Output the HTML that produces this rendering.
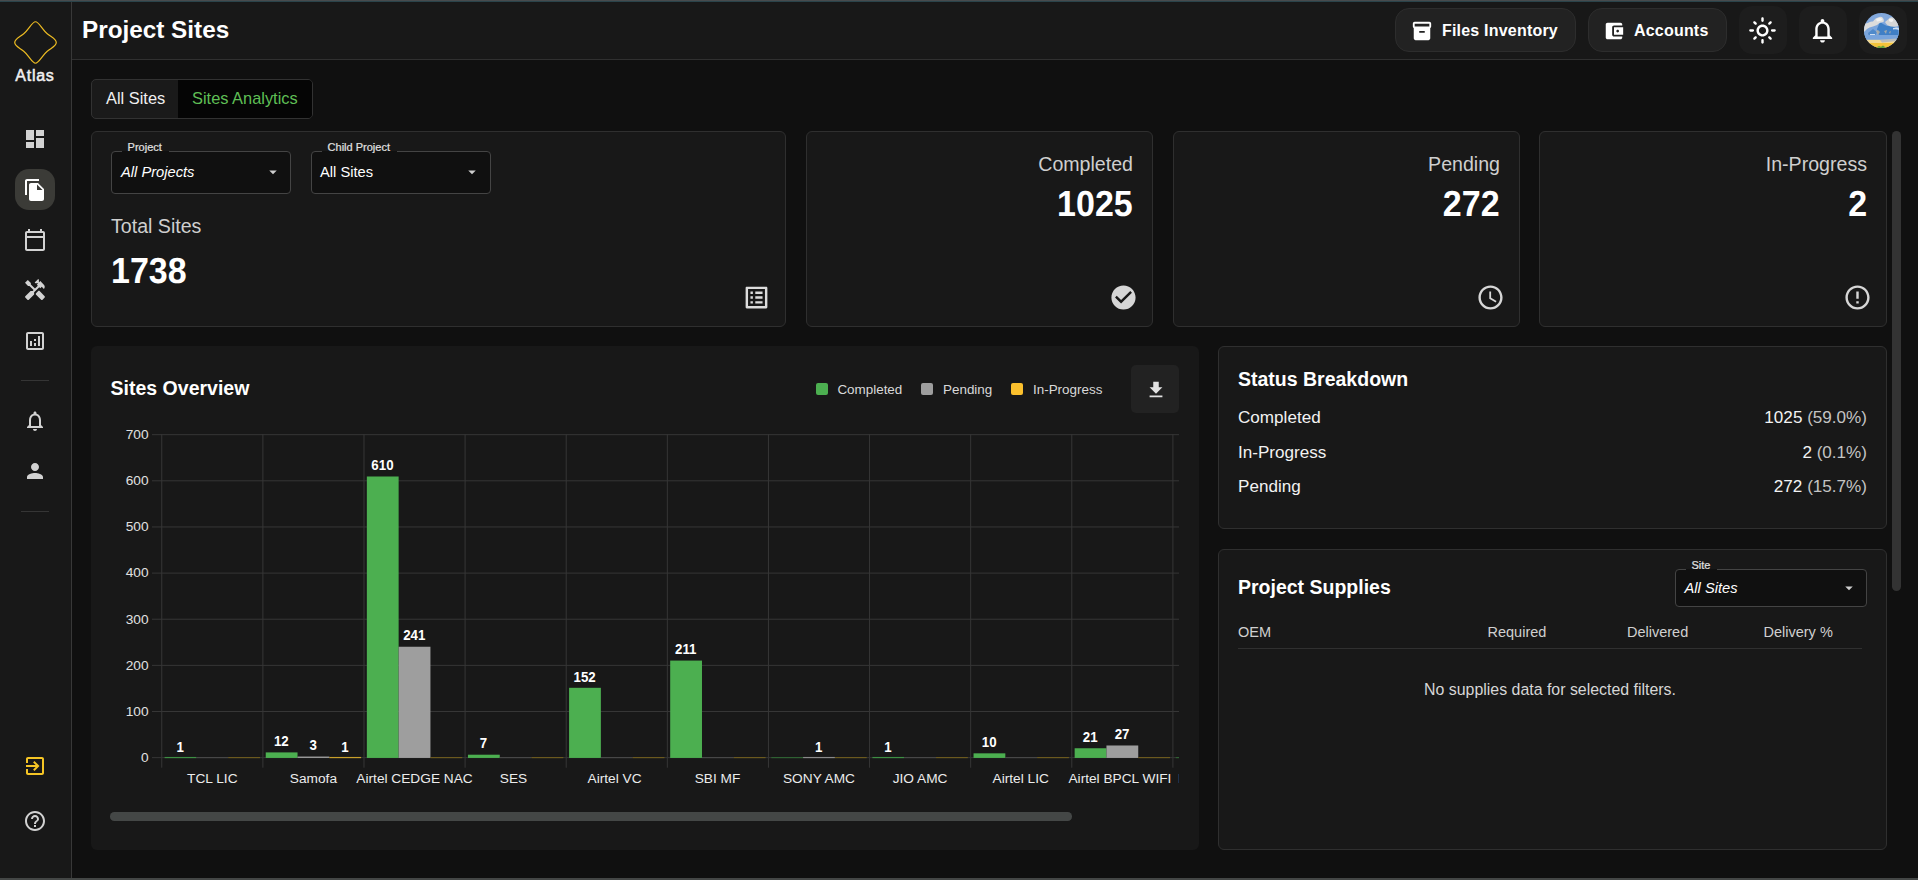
<!DOCTYPE html>
<html lang="en">
<head>
<meta charset="utf-8">
<title>Project Sites</title>
<style>
*{box-sizing:border-box;margin:0;padding:0}
html,body{width:1918px;height:880px;overflow:hidden;background:#101010;font-family:"Liberation Sans",sans-serif;color:#fff}
.abs{position:absolute}
#topstrip{left:0;top:0;width:1918px;height:2px;background:linear-gradient(#474b4d 0 50%,#2a434a 50% 100%)}
#botstrip{left:0;top:878px;width:1918px;height:2px;background:#444746}
#sidebar{left:0;top:2px;width:71px;height:876px;background:#181818}
#sideline{left:71px;top:2px;width:1px;height:876px;background:#383838}
#header{left:72px;top:2px;width:1846px;height:57px;background:#181818}
#headline{left:72px;top:59px;width:1846px;height:1px;background:#303030}
svg.ic{position:absolute;width:24px;height:24px;fill:#d2d2d2}
.card{position:absolute;background:#181818;border:1px solid #2f2f2f;border-radius:6px}
.t{position:absolute;white-space:nowrap;line-height:1}

.hbtn{background:#222;border:1px solid #2d2d2d;border-radius:14px}
.ibtn{width:48px;height:48px;background:#1d1d1d;border-radius:13px}

.sel{border:1px solid #444;border-radius:4px;background:#101010}
.lbl{font-size:11px;color:#e2e2e2;-webkit-text-stroke:0.200px #e2e2e2}
.lbl span{background:linear-gradient(#181818 0 72.300%,#101010 72.300%);padding:0 7px 0 5.500px;margin-left:-5.500px;display:inline-block;line-height:18px}
.sl{font-size:19.600px;color:#cfcfcf}
.sn{font-size:36.3px;font-weight:bold;color:#fff;text-rendering:geometricPrecision;transform:scaleX(0.9366);transform-origin:100% 50%}

.lg{width:12px;height:12px;border-radius:2px}
.lgt{font-size:13.430px;color:#d8d8d8}
.row{font-size:17.100px;color:#f2f2f2}
.row span{color:#c4c4c4}
.th{font-size:14.500px;color:#d0d0d0}
</style>
</head>
<body>
<div class="abs" id="sidebar"></div>
<div class="abs" id="sideline"></div>
<div class="abs" id="header"></div>
<div class="abs" id="headline"></div>
<div class="abs" id="topstrip"></div>
<div class="abs" id="botstrip"></div>

<!-- SIDEBAR -->
<svg class="abs" style="left:12px;top:18.900px;width:47px;height:47px" viewBox="0 0 48 48"><path d="M24 2.8 C27.5 2.8 31 11 36 15 C41 19 45.2 20.5 45.2 24 C45.2 27.5 41 29 36 33 C31 37 27.5 45.2 24 45.2 C20.5 45.2 17 37 12 33 C7 29 2.8 27.5 2.8 24 C2.8 20.5 7 19 12 15 C17 11 20.5 2.8 24 2.8 Z" fill="none" stroke="#ecbb22" stroke-width="1.25"/></svg>
<div class="t" id="atlas" style="left:15.300px;top:68.200px;font-size:16px;font-weight:normal;letter-spacing:0.750px;-webkit-text-stroke:0.500px #f0f0f0;color:#f0f0f0">Atlas</div>

<svg class="ic" style="left:23px;top:126.750px" viewBox="0 0 24 24"><path d="M3 13h8V3H3v10zm0 8h8v-6H3v6zm10 0h8V11h-8v10zm0-18v6h8V3h-8z"/></svg>
<div class="abs" style="left:15px;top:169px;width:40px;height:41px;border-radius:14px;background:#3b3b37"></div>
<svg class="ic" style="left:23px;top:178px;fill:#fff" viewBox="0 0 24 24"><path d="M16 1H4c-1.1 0-2 .9-2 2v14h2V3h12V1zm-1 4 6 6v10c0 1.1-.9 2-2 2H7.99C6.89 23 6 22.1 6 21l.01-14c0-1.100.89-2 1.990-2h7zm-1 7h5.500L14 6.500V12z"/></svg>
<svg class="ic" style="left:23px;top:228px" viewBox="0 0 24 24"><path d="M20 3h-1V1h-2v2H7V1H5v2H4c-1.100 0-2 .9-2 2v16c0 1.100.9 2 2 2h16c1.100 0 2-.9 2-2V5c0-1.100-.9-2-2-2zm0 18H4V10h16v11zm0-13H4V5h16v3z"/></svg>
<svg class="ic" style="left:23px;top:278px" viewBox="0 0 24 24"><path d="M21.670 18.170l-5.300-5.300h-.99l-2.540 2.540v.99l5.300 5.300c.39.39 1.020.39 1.410 0l2.120-2.120c.39-.38.39-1.020 0-1.410z"/><path d="M17.340 10.190l1.410-1.410 2.120 2.120c1.170-1.170 1.170-3.070 0-4.240l-3.540-3.540-1.410 1.410V1.710l-.7-.71-3.540 3.540.71.710h2.830l-1.410 1.410 1.060 1.060-2.890 2.890-4.130-4.130V5.060L4.830 2.040 2 4.870 5.030 7.900h1.410l4.130 4.130-.85.850H7.600l-5.300 5.300c-.39.39-.39 1.020 0 1.410l2.120 2.120c.39.39 1.020.39 1.410 0l5.300-5.300v-2.120l5.150-5.150 1.060 1.050z"/></svg>
<svg class="ic" style="left:23px;top:329px" viewBox="0 0 24 24"><path d="M19 3H5c-1.100 0-2 .9-2 2v14c0 1.100.9 2 2 2h14c1.100 0 2-.9 2-2V5c0-1.100-.9-2-2-2zm0 16H5V5h14v14zM7 12h2v5H7zm8-5h2v10h-2zm-4 7h2v3h-2zm0-4h2v2h-2z"/></svg>
<div class="abs" style="left:21px;top:380px;width:28px;height:1px;background:#353535"></div>
<svg class="ic" style="left:23px;top:409px" viewBox="0 0 24 24"><path d="M12 22c1.100 0 2-.9 2-2h-4c0 1.100.9 2 2 2zm6-6v-5c0-3.070-1.630-5.640-4.500-6.320V4c0-.83-.67-1.500-1.500-1.500s-1.500.67-1.500 1.500v.68C7.640 5.360 6 7.920 6 11v5l-2 2v1h16v-1l-2-2zm-2 1H8v-6c0-2.480 1.510-4.500 4-4.500s4 2.020 4 4.500v6z"/></svg>
<svg class="ic" style="left:23px;top:459px" viewBox="0 0 24 24"><path d="M12 12c2.210 0 4-1.790 4-4s-1.790-4-4-4-4 1.790-4 4 1.790 4 4 4zm0 2c-2.670 0-8 1.340-8 4v2h16v-2c0-2.660-5.330-4-8-4z"/></svg>
<div class="abs" style="left:21px;top:511px;width:28px;height:1px;background:#353535"></div>
<svg class="ic" style="left:23px;top:754px;fill:#f5c525" viewBox="0 0 24 24"><path d="M10.090 15.590 11.500 17l5-5-5-5-1.410 1.410L12.670 11H3v2h9.670l-2.580 2.590zM19 3H5c-1.110 0-2 .9-2 2v4h2V5h14v14H5v-4H3v4c0 1.100.89 2 2 2h14c1.100 0 2-.9 2-2V5c0-1.100-.9-2-2-2z"/></svg>
<svg class="ic" style="left:23px;top:809px" viewBox="0 0 24 24"><path d="M11 18h2v-2h-2v2zm1-16C6.480 2 2 6.480 2 12s4.480 10 10 10 10-4.480 10-10S17.520 2 12 2zm0 18c-4.410 0-8-3.590-8-8s3.590-8 8-8 8 3.590 8 8-3.590 8-8 8zm0-14c-2.210 0-4 1.790-4 4h2c0-1.100.9-2 2-2s2 .9 2 2c0 2-3 1.750-3 5h2c0-2.250 3-2.500 3-5 0-2.210-1.790-4-4-4z"/></svg>

<!-- HEADER -->
<div class="t" id="title" style="left:82px;top:17.800px;font-size:24.300px;font-weight:bold;color:#fff">Project Sites</div>

<div class="abs hbtn" style="left:1395px;top:8px;width:181px;height:44px"></div>
<svg class="ic" style="left:1411px;top:20px;width:22px;height:22px;fill:#fff" viewBox="0 0 24 24"><path d="M20 2H4c-1 0-2 .9-2 2v3.010c0 .72.43 1.340 1 1.690V20c0 1.100 1.100 2 2 2h14c.9 0 2-.9 2-2V8.700c.57-.35 1-.97 1-1.690V4c0-1.100-1-2-2-2zm-5 12H9v-2h6v2zm5-7H4V4h16v3z"/></svg>
<div class="t" id="fi" style="left:1442px;top:23px;font-size:16px;font-weight:bold;letter-spacing:0.2px">Files Inventory</div>
<div class="abs hbtn" style="left:1588px;top:8px;width:139px;height:44px"></div>
<svg class="ic" style="left:1603.3px;top:20px;width:22px;height:22px;fill:#fff" viewBox="0 0 24 24"><path d="M21 18v1c0 1.100-.9 2-2 2H5c-1.110 0-2-.9-2-2V5c0-1.100.89-2 2-2h14c1.100 0 2 .9 2 2v1h-9c-1.110 0-2 .9-2 2v8c0 1.100.89 2 2 2h9zm-9-2h10V8H12v8zm4-2.500c-.83 0-1.500-.67-1.500-1.500s.67-1.500 1.500-1.500 1.500.67 1.500 1.500-.67 1.500-1.500 1.500z"/></svg>
<div class="t" id="ac" style="left:1634px;top:23px;font-size:16px;font-weight:bold;letter-spacing:0.2px">Accounts</div>
<div class="abs ibtn" style="left:1739px;top:6px"></div>
<svg class="ic" style="left:1747.800px;top:15.800px;width:29px;height:29px;fill:#fff" viewBox="0 0 24 24"><path d="M12 9c1.650 0 3 1.350 3 3s-1.350 3-3 3-3-1.350-3-3 1.350-3 3-3m0-2c-2.760 0-5 2.240-5 5s2.240 5 5 5 5-2.240 5-5-2.240-5-5-5zM2 13h2c.55 0 1-.45 1-1s-.45-1-1-1H2c-.55 0-1 .45-1 1s.45 1 1 1zm18 0h2c.55 0 1-.45 1-1s-.45-1-1-1h-2c-.55 0-1 .45-1 1s.45 1 1 1zM11 2v2c0 .55.45 1 1 1s1-.45 1-1V2c0-.55-.45-1-1-1s-1 .45-1 1zm0 18v2c0 .55.45 1 1 1s1-.45 1-1v-2c0-.55-.45-1-1-1s-1 .45-1 1zM5.990 4.580c-.39-.39-1.030-.39-1.410 0-.39.39-.39 1.030 0 1.410l1.060 1.060c.39.39 1.030.39 1.410 0s.39-1.030 0-1.410L5.990 4.580zm12.370 12.370c-.39-.39-1.030-.39-1.410 0-.39.39-.39 1.030 0 1.410l1.060 1.060c.39.39 1.030.39 1.410 0 .39-.39.39-1.030 0-1.410l-1.060-1.060zm1.060-10.960c.39-.39.39-1.030 0-1.410-.39-.39-1.030-.39-1.410 0l-1.060 1.060c-.39.39-.39 1.030 0 1.410s1.030.39 1.410 0l1.060-1.060zM7.050 18.360c.39-.39.39-1.030 0-1.410-.39-.39-1.030-.39-1.410 0l-1.060 1.060c-.39.39-.39 1.030 0 1.410s1.030.39 1.410 0l1.060-1.060z"/></svg>
<div class="abs ibtn" style="left:1799px;top:6px"></div>
<svg class="ic" style="left:1807.900px;top:15.900px;width:29px;height:29px;fill:#fff" viewBox="0 0 24 24"><path d="M12 22c1.100 0 2-.9 2-2h-4c0 1.100.9 2 2 2zm6-6v-5c0-3.070-1.630-5.640-4.500-6.320V4c0-.83-.67-1.500-1.500-1.500s-1.500.67-1.500 1.500v.68C7.640 5.360 6 7.920 6 11v5l-2 2v1h16v-1l-2-2zm-2 1H8v-6c0-2.480 1.510-4.500 4-4.500s4 2.020 4 4.500v6z"/></svg>
<div class="abs ibtn" style="left:1859px;top:6px"></div>
<svg class="abs" style="left:1864px;top:13px;width:35px;height:35px" viewBox="0 0 35 35">
<defs><clipPath id="avc"><circle cx="17.5" cy="17.5" r="17.5"/></clipPath></defs>
<g clip-path="url(#avc)">
<rect width="35" height="35" fill="#82a8dc"/>
<path d="M0 14 L0 22 L35 22 L35 12 L28 10 L22 12 L16 8 L8 12 Z" fill="#7ba5dc"/>
<path d="M13 16 L16 9 L19 11 L23 13 L27 12 L34 16 L35 24 L30 24 L24 22 L18 24 L14 21 Z" fill="#3f7fc6"/>
<path d="M4 20 L9 16 L13 19 L11 23 L5 24 Z" fill="#4f8acb"/>
<path d="M0 12 Q1 10 4 10 Q6 8 9 8.500 Q11 5 14 4.500 Q17 3 19 5 Q20.500 7 19.500 9 Q17 9.500 15.500 10 Q13 13 9 13.500 Q5 14 3 16 Q1 18 0 19 Z" fill="#dcdcdc"/>
<path d="M21 9 Q23 7.500 24.500 6 Q26 3.500 29 4.500 Q32 6 33 9 Q35 11 35 13 Q31 14 27 13.500 Q23 13 21 9 Z" fill="#d6d6d6"/>
<path d="M12 6 Q14 5 16 5 Q18 5 18.500 7 Q16 8 13 8.500 Z M25 6 Q27 5 29 6 Q30 8 28 9 Q26 9 25 8 Z" fill="#f2f2f2"/>
<path d="M29 15 Q32 14 35 15 L35 17 Q32 16 29 16.500 Z M6 21 L11 21 L11 22 L6 22 Z M24 24.500 L33 23 L33 24.500 L25 25.500 Z" fill="#cfe0f2"/>
<path d="M0 22 L35 22 L35 27 L0 27 Z" fill="#78a4dc"/>
<path d="M12 18 L14 17 L16 19 L14 22 Z M20 18 L23 17 L22 21 Z M25 19 L27 18 L26 21 Z" fill="#b9b3a4" opacity="0.8"/>
<rect x="0" y="26.800" width="35" height="4" fill="#f3d992"/>
<path d="M16 27 L32 25.500 L33 28 L18 29.500 Z" fill="#b9bcbc"/>
<rect x="0" y="30" width="35" height="5" fill="#f4c33a"/>
<path d="M13 34 L15 33 L17 33.800 L19 32.500 L21 34 L22 35 L13 35 Z" fill="#5fa03c"/>
</g></svg>

<!-- TABS -->
<div class="abs" style="left:91px;top:79px;width:222px;height:40px;border:1px solid #323232;border-radius:5px;background:#1a1a1a;overflow:hidden"><div class="abs" style="left:86px;top:0;width:136px;height:40px;background:#050505"></div></div>
<div class="t" id="tab1" style="left:106px;top:90px;font-size:16.4px;color:#f0f0f0">All Sites</div>
<div class="t" id="tab2" style="left:192px;top:90px;font-size:16.4px;color:#5fbf55">Sites Analytics</div>

<!-- CARD 1 -->
<div class="card" style="left:91px;top:131px;width:695px;height:196px"></div>
<div class="abs sel" style="left:111px;top:151px;width:180px;height:43px"></div>
<div class="t lbl" id="lb1" style="left:127.600px;top:138px"><span>Project</span></div>
<div class="t" id="sv1" style="left:121px;top:165px;font-size:14.700px;font-style:italic;color:#fff">All Projects</div>
<svg class="ic" style="left:264.300px;top:163.400px;width:18px;height:18px;fill:#cfcfcf" viewBox="0 0 24 24"><path d="M7 10l5 5 5-5z"/></svg>
<div class="abs sel" style="left:311px;top:151px;width:180px;height:43px"></div>
<div class="t lbl" id="lb2" style="left:327.600px;top:138px"><span>Child Project</span></div>
<div class="t" id="sv2" style="left:320px;top:165px;font-size:14.700px;color:#fff">All Sites</div>
<svg class="ic" style="left:463.200px;top:163.400px;width:18px;height:18px;fill:#cfcfcf" viewBox="0 0 24 24"><path d="M7 10l5 5 5-5z"/></svg>
<div class="t" id="ts" style="left:111px;top:216.500px;font-size:19.600px;color:#cfcfcf">Total Sites</div>
<div class="t" id="tsn" style="left:111px;top:253.100px;font-size:36.3px;font-weight:bold;color:#fff;text-rendering:geometricPrecision;transform:scaleX(0.9366);transform-origin:0 50%">1738</div>
<svg class="ic" style="left:741.900px;top:282.700px;width:29px;height:29px;fill:#dcdcdc" viewBox="0 0 24 24"><path d="M19 5v14H5V5h14m1.100-2H3.900c-.5 0-.9.4-.9.900v16.200c0 .4.400.9.900.9h16.200c.4 0 .9-.5.900-.9V3.900c0-.5-.5-.9-.9-.9zM11 7h6v2h-6V7zm0 4h6v2h-6v-2zm0 4h6v2h-6zM7 7h2v2H7zm0 4h2v2H7zm0 4h2v2H7z"/></svg>

<!-- STAT CARDS -->
<div class="card" style="left:806px;top:131px;width:347px;height:196px"></div>
<div class="t sl" id="s1l" style="right:785px;top:155px">Completed</div>
<div class="t sn" id="s1n" style="right:785px;top:185.800px">1025</div>
<svg class="ic" style="left:1109.0px;top:282.900px;width:29px;height:29px;fill:#d6d6d6" viewBox="0 0 24 24"><path d="M12 2C6.480 2 2 6.480 2 12s4.480 10 10 10 10-4.480 10-10S17.520 2 12 2zm-2 15-5-5 1.410-1.410L10 14.170l7.590-7.590L19 8l-9 9z"/></svg>
<div class="card" style="left:1173px;top:131px;width:347px;height:196px"></div>
<div class="t sl" id="s2l" style="right:418px;top:155px">Pending</div>
<div class="t sn" id="s2n" style="right:418px;top:185.800px">272</div>
<svg class="ic" style="left:1476.0px;top:282.900px;width:29px;height:29px;fill:#d6d6d6" viewBox="0 0 24 24"><path d="M11.990 2C6.470 2 2 6.480 2 12s4.470 10 9.990 10C17.520 22 22 17.520 22 12S17.520 2 11.990 2zM12 20c-4.420 0-8-3.580-8-8s3.580-8 8-8 8 3.580 8 8-3.580 8-8 8zm.5-13H11v6l5.250 3.150.75-1.230-4.500-2.670z"/></svg>
<div class="card" style="left:1539px;top:131px;width:348px;height:196px"></div>
<div class="t sl" id="s3l" style="right:51px;top:155px">In-Progress</div>
<div class="t sn" id="s3n" style="right:51px;top:185.800px">2</div>
<svg class="ic" style="left:1843.0px;top:282.900px;width:29px;height:29px;fill:#d6d6d6" viewBox="0 0 24 24"><path d="M11 15h2v2h-2zm0-8h2v6h-2zm.99-5C6.470 2 2 6.480 2 12s4.470 10 9.990 10C17.520 22 22 17.520 22 12S17.520 2 11.990 2zM12 20c-4.420 0-8-3.580-8-8s3.580-8 8-8 8 3.580 8 8-3.580 8-8 8z"/></svg>

<!-- page scrollbar -->
<div class="abs" style="left:1892px;top:131px;width:9px;height:460px;border-radius:4.500px;background:#333"></div>

<!-- CHART PANEL -->
<div class="abs" style="left:91px;top:346px;width:1108px;height:504px;border-radius:6px;background:#181818"></div>
<div class="t" id="so" style="left:110.600px;top:379.100px;font-size:19.500px;font-weight:bold;color:#fff">Sites Overview</div>
<div class="abs lg" style="left:816px;top:383px;background:#4caf50"></div>
<div class="t lgt" id="lg1" style="left:837.400px;top:382.500px">Completed</div>
<div class="abs lg" style="left:921px;top:383px;background:#9e9e9e"></div>
<div class="t lgt" id="lg2" style="left:943px;top:382.500px">Pending</div>
<div class="abs lg" style="left:1011px;top:383px;background:#fbc02d"></div>
<div class="t lgt" id="lg3" style="left:1033px;top:382.500px">In-Progress</div>
<div class="abs" style="left:1131px;top:365px;width:48px;height:48px;border-radius:5px;background:#222"></div>
<svg class="ic" style="left:1144.600px;top:379px;width:22px;height:22px;fill:#e2e2e2" viewBox="0 0 24 24"><path d="M19 9h-4V3H9v6H5l7 7 7-7zM5 18v2h14v-2H5z"/></svg>
<!--CHART-START-->
<svg class="abs" id="chart" style="left:100px;top:420px;width:1079px;height:380px" viewBox="100 420 1079 380" font-family="Liberation Sans, sans-serif">
<rect x="152" y="757.14" width="1027" height="1" fill="#363636"/>
<rect x="152" y="711.00" width="1027" height="1" fill="#363636"/>
<rect x="152" y="664.86" width="1027" height="1" fill="#363636"/>
<rect x="152" y="618.72" width="1027" height="1" fill="#363636"/>
<rect x="152" y="572.58" width="1027" height="1" fill="#363636"/>
<rect x="152" y="526.44" width="1027" height="1" fill="#363636"/>
<rect x="152" y="480.30" width="1027" height="1" fill="#363636"/>
<rect x="152" y="434.16" width="1027" height="1" fill="#363636"/>
<rect x="161.25" y="434.2" width="1" height="333.5" fill="#363636"/>
<rect x="262.37" y="434.2" width="1" height="333.5" fill="#363636"/>
<rect x="363.48" y="434.2" width="1" height="333.5" fill="#363636"/>
<rect x="464.59" y="434.2" width="1" height="333.5" fill="#363636"/>
<rect x="565.71" y="434.2" width="1" height="333.5" fill="#363636"/>
<rect x="666.83" y="434.2" width="1" height="333.5" fill="#363636"/>
<rect x="767.94" y="434.2" width="1" height="333.5" fill="#363636"/>
<rect x="869.05" y="434.2" width="1" height="333.5" fill="#363636"/>
<rect x="970.17" y="434.2" width="1" height="333.5" fill="#363636"/>
<rect x="1071.28" y="434.2" width="1" height="333.5" fill="#363636"/>
<rect x="1172.40" y="434.2" width="1" height="333.5" fill="#363636"/>
<rect x="164.61" y="756.94" width="31.80" height="1.2" fill="#3d8f43"/>
<text transform="translate(180.21,751.98) scale(1,1.06)" text-anchor="middle" font-size="13.3" font-weight="bold" fill="#ffffff">1</text>
<rect x="196.41" y="757.14" width="31.80" height="1" fill="#4c4c4c"/>
<rect x="228.21" y="757.14" width="31.80" height="1" fill="#75611c"/>
<rect x="265.73" y="752.40" width="31.80" height="5.54" fill="#4caf50"/>
<text transform="translate(281.32,746.10) scale(1,1.06)" text-anchor="middle" font-size="13.3" font-weight="bold" fill="#ffffff">12</text>
<rect x="297.53" y="756.56" width="31.80" height="1.38" fill="#9e9e9e"/>
<text transform="translate(313.12,750.26) scale(1,1.06)" text-anchor="middle" font-size="13.3" font-weight="bold" fill="#ffffff">3</text>
<rect x="329.33" y="756.94" width="31.80" height="1.2" fill="#c9a02a"/>
<text transform="translate(344.93,751.98) scale(1,1.06)" text-anchor="middle" font-size="13.3" font-weight="bold" fill="#ffffff">1</text>
<rect x="366.84" y="476.49" width="31.80" height="281.45" fill="#4caf50"/>
<text transform="translate(382.44,470.19) scale(1,1.06)" text-anchor="middle" font-size="13.3" font-weight="bold" fill="#ffffff">610</text>
<rect x="398.64" y="646.74" width="31.80" height="111.20" fill="#9e9e9e"/>
<text transform="translate(414.24,640.44) scale(1,1.06)" text-anchor="middle" font-size="13.3" font-weight="bold" fill="#ffffff">241</text>
<rect x="430.44" y="757.14" width="31.80" height="1" fill="#75611c"/>
<rect x="467.95" y="754.71" width="31.80" height="3.23" fill="#4caf50"/>
<text transform="translate(483.55,748.41) scale(1,1.06)" text-anchor="middle" font-size="13.3" font-weight="bold" fill="#ffffff">7</text>
<rect x="499.75" y="757.14" width="31.80" height="1" fill="#4c4c4c"/>
<rect x="531.55" y="757.14" width="31.80" height="1" fill="#75611c"/>
<rect x="569.07" y="687.81" width="31.80" height="70.13" fill="#4caf50"/>
<text transform="translate(584.67,681.51) scale(1,1.06)" text-anchor="middle" font-size="13.3" font-weight="bold" fill="#ffffff">152</text>
<rect x="600.87" y="757.14" width="31.80" height="1" fill="#4c4c4c"/>
<rect x="632.67" y="757.14" width="31.80" height="1" fill="#75611c"/>
<rect x="670.19" y="660.58" width="31.80" height="97.36" fill="#4caf50"/>
<text transform="translate(685.79,654.28) scale(1,1.06)" text-anchor="middle" font-size="13.3" font-weight="bold" fill="#ffffff">211</text>
<rect x="701.99" y="757.14" width="31.80" height="1" fill="#4c4c4c"/>
<rect x="733.79" y="757.14" width="31.80" height="1" fill="#75611c"/>
<rect x="771.30" y="757.14" width="31.80" height="1" fill="#2f6a33"/>
<rect x="803.10" y="756.94" width="31.80" height="1.2" fill="#8a8a8a"/>
<text transform="translate(818.70,751.98) scale(1,1.06)" text-anchor="middle" font-size="13.3" font-weight="bold" fill="#ffffff">1</text>
<rect x="834.90" y="757.14" width="31.80" height="1" fill="#75611c"/>
<rect x="872.41" y="756.94" width="31.80" height="1.2" fill="#3d8f43"/>
<text transform="translate(888.01,751.98) scale(1,1.06)" text-anchor="middle" font-size="13.3" font-weight="bold" fill="#ffffff">1</text>
<rect x="904.21" y="757.14" width="31.80" height="1" fill="#4c4c4c"/>
<rect x="936.01" y="757.14" width="31.80" height="1" fill="#75611c"/>
<rect x="973.53" y="753.33" width="31.80" height="4.61" fill="#4caf50"/>
<text transform="translate(989.13,747.03) scale(1,1.06)" text-anchor="middle" font-size="13.3" font-weight="bold" fill="#ffffff">10</text>
<rect x="1005.33" y="757.14" width="31.80" height="1" fill="#4c4c4c"/>
<rect x="1037.13" y="757.14" width="31.80" height="1" fill="#75611c"/>
<rect x="1074.64" y="748.25" width="31.80" height="9.69" fill="#4caf50"/>
<text transform="translate(1090.24,741.95) scale(1,1.06)" text-anchor="middle" font-size="13.3" font-weight="bold" fill="#ffffff">21</text>
<rect x="1106.44" y="745.48" width="31.80" height="12.46" fill="#9e9e9e"/>
<text transform="translate(1122.04,739.18) scale(1,1.06)" text-anchor="middle" font-size="13.3" font-weight="bold" fill="#ffffff">27</text>
<rect x="1138.24" y="757.14" width="31.80" height="1" fill="#75611c"/>
<rect x="1175.76" y="757.14" width="31.80" height="1" fill="#2f6a33"/>
<rect x="1207.56" y="757.14" width="31.80" height="1" fill="#4c4c4c"/>
<rect x="1239.36" y="757.14" width="31.80" height="1" fill="#75611c"/>
<text x="212.31" y="783.3" text-anchor="middle" font-size="13.7" fill="#ececec">TCL LIC</text>
<text x="313.42" y="783.3" text-anchor="middle" font-size="13.7" fill="#ececec">Samofa</text>
<text x="414.54" y="783.3" text-anchor="middle" font-size="13.7" fill="#ececec">Airtel CEDGE NAC</text>
<text x="513.55" y="783.3" text-anchor="middle" font-size="13.7" fill="#ececec">SES</text>
<text x="614.57" y="783.3" text-anchor="middle" font-size="13.7" fill="#ececec">Airtel VC</text>
<text x="717.48" y="783.3" text-anchor="middle" font-size="13.7" fill="#ececec">SBI MF</text>
<text x="819.00" y="783.3" text-anchor="middle" font-size="13.7" fill="#ececec">SONY AMC</text>
<text x="920.11" y="783.3" text-anchor="middle" font-size="13.7" fill="#ececec">JIO AMC</text>
<text x="1020.73" y="783.3" text-anchor="middle" font-size="13.7" fill="#ececec">Airtel LIC</text>
<text x="1119.94" y="783.3" text-anchor="middle" font-size="13.7" fill="#ececec">Airtel BPCL WIFI</text>
<text x="1177.8" y="783.3" font-size="13.7" fill="#ececec" opacity="0.45">B</text>
<text x="148.6" y="762.04" text-anchor="end" font-size="13.7" fill="#e0e0e0">0</text>
<text x="148.6" y="715.90" text-anchor="end" font-size="13.7" fill="#e0e0e0">100</text>
<text x="148.6" y="669.76" text-anchor="end" font-size="13.7" fill="#e0e0e0">200</text>
<text x="148.6" y="623.62" text-anchor="end" font-size="13.7" fill="#e0e0e0">300</text>
<text x="148.6" y="577.48" text-anchor="end" font-size="13.7" fill="#e0e0e0">400</text>
<text x="148.6" y="531.34" text-anchor="end" font-size="13.7" fill="#e0e0e0">500</text>
<text x="148.6" y="485.20" text-anchor="end" font-size="13.7" fill="#e0e0e0">600</text>
<text x="148.6" y="439.06" text-anchor="end" font-size="13.7" fill="#e0e0e0">700</text>
</svg>
<!--CHART-END-->
<div class="abs" style="left:110px;top:812px;width:962px;height:8.500px;border-radius:4.250px;background:#444746"></div>

<!-- STATUS BREAKDOWN -->
<div class="card" style="left:1218px;top:346px;width:669px;height:183px"></div>
<div class="t" id="sb" style="left:1238px;top:370.400px;font-size:19.500px;font-weight:bold;color:#fff">Status Breakdown</div>
<div class="t row" id="r1l" style="left:1238px;top:409px">Completed</div>
<div class="t row" id="r1v" style="right:51px;top:409px">1025 <span>(59.0%)</span></div>
<div class="t row" id="r2l" style="left:1238px;top:443.500px">In-Progress</div>
<div class="t row" id="r2v" style="right:51px;top:443.500px">2 <span>(0.1%)</span></div>
<div class="t row" id="r3l" style="left:1238px;top:478px">Pending</div>
<div class="t row" id="r3v" style="right:51px;top:478px">272 <span>(15.7%)</span></div>

<!-- PROJECT SUPPLIES -->
<div class="card" style="left:1218px;top:549px;width:669px;height:301px"></div>
<div class="t" id="ps" style="left:1238px;top:578.300px;font-size:19.500px;font-weight:bold;color:#fff">Project Supplies</div>
<div class="abs sel" style="left:1675px;top:569px;width:192px;height:38px"></div>
<div class="t lbl" id="lb3" style="left:1691.500px;top:556px"><span>Site</span></div>
<div class="t" id="sv3" style="left:1684.500px;top:581px;font-size:14.700px;font-style:italic;color:#fff">All Sites</div>
<svg class="ic" style="left:1839.600px;top:578.700px;width:18px;height:18px;fill:#cfcfcf" viewBox="0 0 24 24"><path d="M7 10l5 5 5-5z"/></svg>
<div class="t th" id="th1" style="left:1238px;top:625px">OEM</div>
<div class="t th" id="th2" style="left:1487.500px;top:625px">Required</div>
<div class="t th" id="th3" style="left:1627px;top:625px">Delivered</div>
<div class="t th" id="th4" style="left:1763.500px;top:625px">Delivery %</div>
<div class="abs" style="left:1238px;top:648px;width:624px;height:1px;background:#303030"></div>
<div class="t" id="nodata" style="left:1424px;top:682.200px;font-size:15.920px;color:#d6d6d6">No supplies data for selected filters.</div>

</body>
</html>
